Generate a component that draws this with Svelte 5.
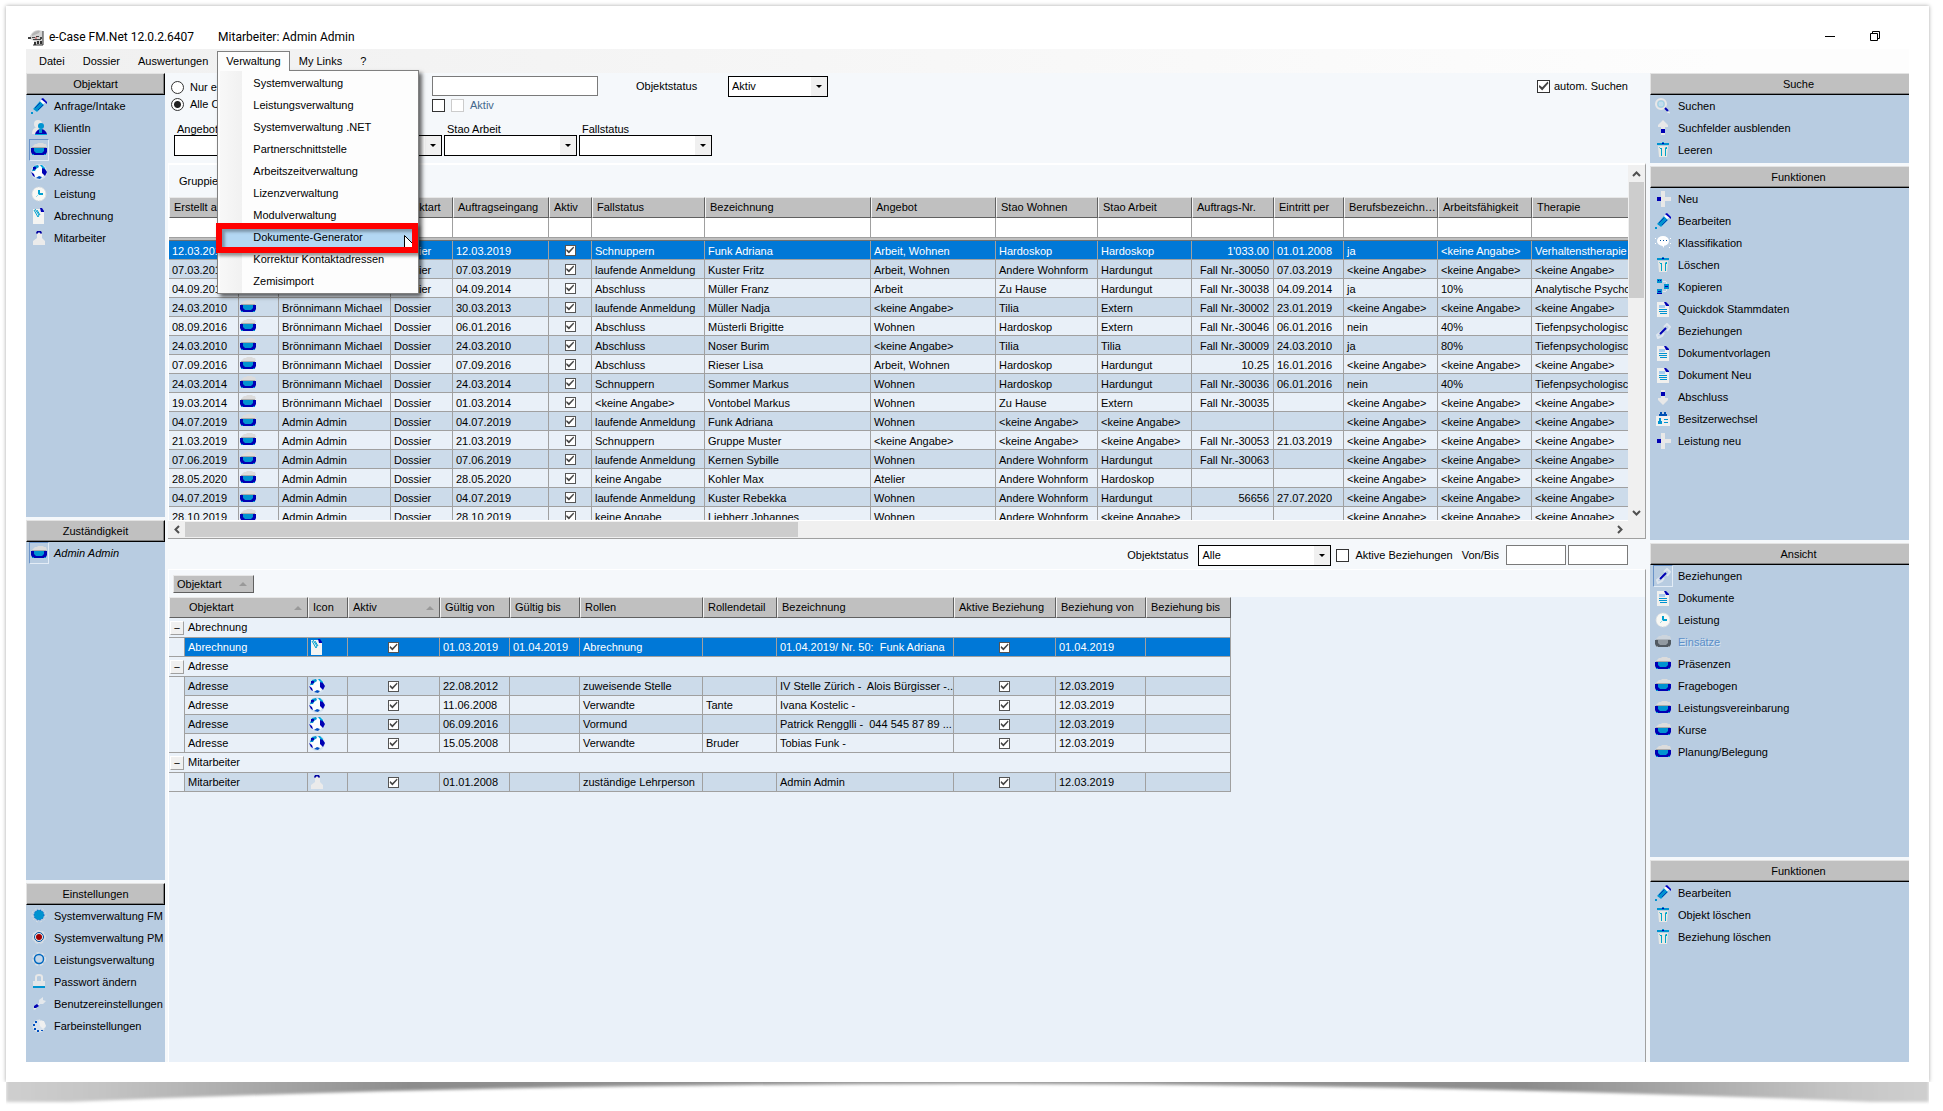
<script lang="ts">
    interface Column {
        label: string;
        width: number;
        type?: 'icon' | 'check' | 'number';
        sorted?: boolean;
    }

    interface Item {
        icon: string;
        label: string;
        active?: boolean;
        italic?: boolean;
        disabled?: boolean;
    }

    interface Panel {
        title: string;
        items: Item[];
    }

    const NONE = '<keine Angabe>';

    const menus = ['Datei', 'Dossier', 'Auswertungen', 'Verwaltung', 'My Links', '?'];
    const openMenu = 'Verwaltung';
    const menuItems = [
        'Systemverwaltung',
        'Leistungsverwaltung',
        'Systemverwaltung .NET',
        'Partnerschnittstelle',
        'Arbeitszeitverwaltung',
        'Lizenzverwaltung',
        'Modulverwaltung',
        'Dokumente-Generator',
        'Korrektur Kontaktadressen',
        'Zemisimport'
    ];
    const markedItem = 'Dokumente-Generator';

    const leftPanels: Panel[] = [
        {
            title: 'Objektart',
            items: [
                { icon: 'pen', label: 'Anfrage/Intake' },
                { icon: 'client', label: 'KlientIn' },
                { icon: 'folder', label: 'Dossier', active: true },
                { icon: 'globe', label: 'Adresse' },
                { icon: 'clock', label: 'Leistung' },
                { icon: 'bill', label: 'Abrechnung' },
                { icon: 'staff', label: 'Mitarbeiter' }
            ]
        },
        {
            title: 'Zuständigkeit',
            items: [{ icon: 'folder', label: 'Admin Admin', active: true, italic: true }]
        },
        {
            title: 'Einstellungen',
            items: [
                { icon: 'gearFull', label: 'Systemverwaltung FM' },
                { icon: 'gearRed', label: 'Systemverwaltung PM' },
                { icon: 'gear', label: 'Leistungsverwaltung' },
                { icon: 'lock', label: 'Passwort ändern' },
                { icon: 'wrench', label: 'Benutzereinstellungen' },
                { icon: 'palette', label: 'Farbeinstellungen' }
            ]
        }
    ];

    const rightPanels: Panel[] = [
        {
            title: 'Suche',
            items: [
                { icon: 'search', label: 'Suchen' },
                { icon: 'up', label: 'Suchfelder ausblenden' },
                { icon: 'trash', label: 'Leeren' }
            ]
        },
        {
            title: 'Funktionen',
            items: [
                { icon: 'plus', label: 'Neu' },
                { icon: 'pen', label: 'Bearbeiten' },
                { icon: 'bubble', label: 'Klassifikation' },
                { icon: 'trash', label: 'Löschen' },
                { icon: 'copy', label: 'Kopieren' },
                { icon: 'doc', label: 'Quickdok Stammdaten' },
                { icon: 'link', label: 'Beziehungen' },
                { icon: 'doc', label: 'Dokumentvorlagen' },
                { icon: 'doc', label: 'Dokument Neu' },
                { icon: 'down', label: 'Abschluss' },
                { icon: 'badge', label: 'Besitzerwechsel' },
                { icon: 'plus', label: 'Leistung neu' }
            ]
        },
        {
            title: 'Ansicht',
            items: [
                { icon: 'link', label: 'Beziehungen', active: true },
                { icon: 'doc', label: 'Dokumente' },
                { icon: 'clock', label: 'Leistung' },
                { icon: 'folder', label: 'Einsätze', disabled: true },
                { icon: 'folder', label: 'Präsenzen' },
                { icon: 'folder', label: 'Fragebogen' },
                { icon: 'folder', label: 'Leistungsvereinbarung' },
                { icon: 'folder', label: 'Kurse' },
                { icon: 'folder', label: 'Planung/Belegung' }
            ]
        },
        {
            title: 'Funktionen',
            items: [
                { icon: 'pen', label: 'Bearbeiten' },
                { icon: 'trash', label: 'Objekt löschen' },
                { icon: 'trash', label: 'Beziehung löschen' }
            ]
        }
    ];

    const filters = ['Angebot', 'Stao Wohnen', 'Stao Arbeit', 'Fallstatus'];

    const caseColumns: Column[] = [
        { label: 'Erstellt am', width: 70 },
        { label: 'Icon', width: 40, type: 'icon' },
        { label: 'Besitzer', width: 112 },
        { label: 'Objektart', width: 62 },
        { label: 'Auftragseingang', width: 96 },
        { label: 'Aktiv', width: 43, type: 'check' },
        { label: 'Fallstatus', width: 113 },
        { label: 'Bezeichnung', width: 166 },
        { label: 'Angebot', width: 125 },
        { label: 'Stao Wohnen', width: 102 },
        { label: 'Stao Arbeit', width: 94 },
        { label: 'Auftrags-Nr.', width: 82, type: 'number' },
        { label: 'Eintritt per', width: 70 },
        { label: 'Berufsbezeichnung', width: 94 },
        { label: 'Arbeitsfähigkeit', width: 94 },
        { label: 'Therapie', width: 180 }
    ];

    const BM = 'Brönnimann Michael';
    const AA = 'Admin Admin';

    // created, owner, received, state, name, offer, living, work, number, entry, job, ability, therapy
    const cases = [
        ['12.03.2019', BM, '12.03.2019', 'Schnuppern', 'Funk Adriana', 'Arbeit, Wohnen', 'Hardoskop', 'Hardoskop', "1'033.00", '01.01.2008', 'ja', NONE, 'Verhaltenstherapie'],
        ['07.03.2019', BM, '07.03.2019', 'laufende Anmeldung', 'Kuster Fritz', 'Arbeit, Wohnen', 'Andere Wohnform', 'Hardungut', 'Fall Nr.-30050', '07.03.2019', NONE, NONE, NONE],
        ['04.09.2014', BM, '04.09.2014', 'Abschluss', 'Müller Franz', 'Arbeit', 'Zu Hause', 'Hardungut', 'Fall Nr.-30038', '04.09.2014', 'ja', '10%', 'Analytische Psychotherapie'],
        ['24.03.2010', BM, '30.03.2013', 'laufende Anmeldung', 'Müller Nadja', NONE, 'Tilia', 'Extern', 'Fall Nr.-30002', '23.01.2019', NONE, NONE, NONE],
        ['08.09.2016', BM, '06.01.2016', 'Abschluss', 'Müsterli Brigitte', 'Wohnen', 'Hardoskop', 'Extern', 'Fall Nr.-30046', '06.01.2016', 'nein', '40%', 'Tiefenpsychologische Therapie'],
        ['24.03.2010', BM, '24.03.2010', 'Abschluss', 'Noser Burim', NONE, 'Tilia', 'Tilia', 'Fall Nr.-30009', '24.03.2010', 'ja', '80%', 'Tiefenpsychologische Therapie'],
        ['07.09.2016', BM, '07.09.2016', 'Abschluss', 'Rieser Lisa', 'Arbeit, Wohnen', 'Hardoskop', 'Hardungut', '10.25', '16.01.2016', NONE, NONE, NONE],
        ['24.03.2014', BM, '24.03.2014', 'Schnuppern', 'Sommer Markus', 'Wohnen', 'Hardoskop', 'Hardungut', 'Fall Nr.-30036', '06.01.2016', 'nein', '40%', 'Tiefenpsychologische Therapie'],
        ['19.03.2014', BM, '01.03.2014', NONE, 'Vontobel Markus', 'Wohnen', 'Zu Hause', 'Extern', 'Fall Nr.-30035', '', NONE, NONE, NONE],
        ['04.07.2019', AA, '04.07.2019', 'laufende Anmeldung', 'Funk Adriana', 'Wohnen', NONE, NONE, '', '', NONE, NONE, NONE],
        ['21.03.2019', AA, '21.03.2019', 'Schnuppern', 'Gruppe Muster', NONE, NONE, NONE, 'Fall Nr.-30053', '21.03.2019', NONE, NONE, NONE],
        ['07.06.2019', AA, '07.06.2019', 'laufende Anmeldung', 'Kernen Sybille', 'Wohnen', 'Andere Wohnform', 'Hardungut', 'Fall Nr.-30063', '', NONE, NONE, NONE],
        ['28.05.2020', AA, '28.05.2020', 'keine Angabe', 'Kohler Max', 'Atelier', 'Andere Wohnform', 'Hardoskop', '', '', NONE, NONE, NONE],
        ['04.07.2019', AA, '04.07.2019', 'laufende Anmeldung', 'Kuster Rebekka', 'Wohnen', 'Andere Wohnform', 'Hardungut', '56656', '27.07.2020', NONE, NONE, NONE],
        ['28.10.2019', AA, '28.10.2019', 'keine Angabe', 'Liebherr Johannes', 'Wohnen', 'Andere Wohnform', NONE, '', '', NONE, NONE, NONE]
    ];

    // every case row carries the same icon, type and tick
    const caseRows = cases.map(c => [c[0], 'folder', c[1], 'Dossier', c[2], 'x', ...c.slice(3)]);

    const relationColumns: Column[] = [
        { label: 'Objektart', width: 123, sorted: true },
        { label: 'Icon', width: 40, type: 'icon' },
        { label: 'Aktiv', width: 92, type: 'check', sorted: true },
        { label: 'Gültig von', width: 70 },
        { label: 'Gültig bis', width: 70 },
        { label: 'Rollen', width: 123 },
        { label: 'Rollendetail', width: 74 },
        { label: 'Bezeichnung', width: 177 },
        { label: 'Aktive Beziehung', width: 102, type: 'check' },
        { label: 'Beziehung von', width: 90 },
        { label: 'Beziehung bis', width: 85 }
    ];

    const relationGroups = [
        {
            name: 'Abrechnung',
            rows: [['Abrechnung', 'bill', 'x', '01.03.2019', '01.04.2019', 'Abrechnung', '', '01.04.2019/ Nr. 50:  Funk Adriana', 'x', '01.04.2019', '']]
        },
        {
            name: 'Adresse',
            rows: [
                ['Adresse', 'globe', 'x', '22.08.2012', '', 'zuweisende Stelle', '', 'IV Stelle Zürich -  Alois Bürgisser -...', 'x', '12.03.2019', ''],
                ['Adresse', 'globe', 'x', '11.06.2008', '', 'Verwandte', 'Tante', 'Ivana Kostelic -', 'x', '12.03.2019', ''],
                ['Adresse', 'globe', 'x', '06.09.2016', '', 'Vormund', '', 'Patrick Rengglli -  044 545 87 89 ...', 'x', '12.03.2019', ''],
                ['Adresse', 'globe', 'x', '15.05.2008', '', 'Verwandte', 'Bruder', 'Tobias Funk -', 'x', '12.03.2019', '']
            ]
        },
        {
            name: 'Mitarbeiter',
            rows: [['Mitarbeiter', 'staff', 'x', '01.01.2008', '', 'zuständige Lehrperson', '', 'Admin Admin', 'x', '12.03.2019', '']]
        }
    ];
</script>

{#snippet icon(name: string)}
    <svg class="icon" viewBox="0 0 16 16" aria-hidden="true">
        {#if name === 'pen'}
            <path d="M11 4 13 6 6 14 2 11 9 3z" fill="#e6e9ee" />
            <path d="M9 3 13 7 6 14 2 11z" fill="#0093d0" />
            <path d="M4 10 9 5M7 12 12 7" stroke="#0040b4" />
            <path d="M9 3 12 1 15 4 12 6z" fill="#fff" />
            <path d="M12 0 16 4V6L10 1z" fill="#0000c0" />
            <path d="M0 14h2v2h-2z" fill="#0093d0" />
        {:else if name === 'client'}
            <circle cx="7" cy="4" r="4" fill="#e8e8e8" />
            <path d="M1 14c0-5 3-7 6-7s5 3 5 7z" fill="#e8e8e8" />
            <circle cx="10" cy="6" r="3" fill="#0093d0" />
            <path d="M4 15c0-3 3-6 6-6s6 3 6 6z" fill="#0000b4" />
            <path d="M8 9h3v4h-3z" fill="#0093d0" />
            <path d="M4 14h12v1H4z" fill="#00a5dc" />
        {:else if name === 'folder'}
            <path d="M2 4 4 2H6l1-1h5l1 1h2l1 3H1z" fill="#dcdcdc" />
            <path d="M1 5h14v1H1z" fill="#aaa" />
            <path d="M0 6h16v4l-1 2H1l-1-2z" fill="#0000b4" />
            <path d="M3 6h10v3l-2 2H5L3 9z" fill="#0093d0" />
            <path d="M1 12h2v1H1zM13 12h2v1h-2z" fill="#0093d0" />
            <path d="M3 12h10v1H3z" fill="#0000b4" />
        {:else if name === 'globe'}
            <circle cx="8" cy="8" r="8" fill="#d5e3ef" />
            <circle cx="8" cy="8" r="6" fill="#fcfdfe" />
            <path d="M3 2 7 1 8 3 5 5 4 7H1z" fill="#0093d0" />
            <path d="M2 3h3v2L2 6z" fill="#0000b4" />
            <path d="M9 1h2l3 3v2l-2-1z" fill="#00a5dc" />
            <path d="M11 4l3 1 2 3-2 4-3-3z" fill="#0000b4" />
            <path d="M0 8l3 2 1 3-2-1z" fill="#0000b4" />
            <path d="M5 14l3-2 3 1-2 2z" fill="#0050c0" />
        {:else if name === 'clock'}
            <circle cx="8" cy="8" r="7" fill="#f8f8f4" stroke="#d8dce0" stroke-dasharray="2 1" />
            <path d="M8 4v4h4" fill="none" stroke="#00a0d0" stroke-width="2" />
            <path d="M8 8 5 11" stroke="#9adbe8" />
        {:else if name === 'bill'}
            <path d="M2 1h8l3 3v12H2z" fill="#f4f4f2" />
            <path d="M9 0h2l2 3v1h-3z" fill="#0000b4" />
            <path d="M3 2 7 9 8 7 4 1M6 2 9 7" fill="none" stroke="#00a0d0" />
        {:else if name === 'staff'}
            <path d="M6 3h5v5l3 3v4H2v-4l4-3z" fill="#ebebeb" />
            <path d="M5 3 6 1h4l1 2-1 1-2-2-2 2z" fill="#0000a0" />
        {:else if name === 'gearFull'}
            <circle cx="8" cy="7" r="7" fill="none" stroke="#d4dbe2" stroke-dasharray="2 2" />
            <circle cx="8" cy="7" r="5" fill="#0093d0" stroke="#0050c0" stroke-dasharray="1 2" />
        {:else if name === 'gearRed'}
            <circle cx="8" cy="7" r="6" fill="#e8e8e8" stroke="#d4dbe2" stroke-width="2" stroke-dasharray="3 2" />
            <circle cx="8" cy="7" r="4.500" fill="#e8e8e8" stroke="#0050a0" />
            <circle cx="8" cy="7" r="3" fill="#a00000" />
        {:else if name === 'gear'}
            <circle cx="8" cy="7" r="6" fill="none" stroke="#d8dfe6" stroke-width="2" stroke-dasharray="3 2" />
            <circle cx="8" cy="7" r="4.500" fill="#c4d6e8" stroke="#0068c0" stroke-width="1.500" />
        {:else if name === 'lock'}
            <path d="M5 7V3q0-2 3-2t3 2v4" fill="none" stroke="#e8e8e8" stroke-width="2" />
            <path d="M2 7h12v6H2z" fill="#e4e6e8" />
            <path d="M2 12h12v2H2z" fill="#0093d0" />
        {:else if name === 'wrench'}
            <path d="M2 13 8 7V4l4-3v3l3 1-3 3h-3l-5 6z" fill="#e4e8ec" />
            <path d="M3 10 6 8 8 10 5 12H3z" fill="#0000b4" />
        {:else if name === 'palette'}
            <circle cx="8" cy="8" r="6" fill="#d8e2ee" stroke="#e8ebee" stroke-dasharray="2 1" />
            <path d="M8 3h5l2 5-3 3-3-3z" fill="#f0f0f0" />
            <path d="M4 3h2v2H4zM2 6h2v2H2zM3 10h2v2H3zM6 12h2v2H6zM10 12h2v1h-2z" fill="#0050c0" />
        {:else if name === 'search'}
            <circle cx="6" cy="6" r="5" fill="none" stroke="#e8e8e8" stroke-width="2" />
            <circle cx="6" cy="6" r="3" fill="#c4dced" stroke="#9fd5e5" />
            <path d="M10 10 13 13" stroke="#0000b4" stroke-width="2" />
            <path d="M12 14 15 15" stroke="#eee" />
        {:else if name === 'up'}
            <path d="M8 0 13 5V7H10v8H6V7H3V5z" fill="#e8e8e8" />
            <path d="M6 9h4v4H6z" fill="#0000b4" />
        {:else if name === 'down'}
            <path d="M8 16 13 11V9H10V1H6V9H3v2z" fill="#e8e8e8" />
            <path d="M6 3h4v4H6z" fill="#0000b4" />
        {:else if name === 'trash'}
            <path d="M3 4h10l-1 11H4z" fill="#e8e8e4" />
            <path d="M2 1h5V0h2v1h5v2H2z" fill="#0093d0" />
            <path d="M7 1h2v1H7z" fill="#0000b4" />
            <path d="M4 5h1v2h1v7h1V6M11 5h1v2h-1v7h-1V6" fill="#00a5c8" />
        {:else if name === 'plus'}
            <path d="M6 0h4v6h6v4h-6v6H6v-6H2V6h4z" fill="#e8e8e8" />
            <path d="M2 6h4v4H2z" fill="#0000b4" />
        {:else if name === 'bubble'}
            <ellipse cx="8" cy="6" rx="6" ry="5" fill="#fff" />
            <path d="M6 9 9 13V9z" fill="#fff" />
            <path d="M5 5h1v1H5zM8 5h1v1H8zM11 5h1v1h-1z" fill="#0050a0" />
            <path d="M0 3h1v1H0zM15 3h1v1h-1zM0 8h1v1H0zM15 8h1v1h-1zM14 12h1v1h-1z" fill="#fff" />
        {:else if name === 'copy'}
            <path d="M2 0h5v4H2zM2 10h5v5H2zM9 5h5v5H9z" fill="#0093d0" />
            <path d="M3 1h1v1H3zM5 1h1v1H5zM3 12h3v1H3zM10 7h3v1h-3zM2 14h5v1H2z" fill="#0000b4" />
            <path d="M8 2h3v1H8zM11 3h1v2h-1zM8 12h3v1H8zM11 10h1v2h-1z" fill="#e0e6ec" />
        {:else if name === 'doc'}
            <path d="M2 1h8l4 4v11H2z" fill="#f0f0ee" />
            <path d="M4 4h6v3H4z" fill="#a8cbee" />
            <path d="M9 1h2l3 3v1h-3z" fill="#0000b4" />
            <path d="M4 8h8v1H4zM4 10h8v1H4zM5 12h7v1H5z" fill="#0093d0" />
        {:else if name === 'link'}
            <path d="M9 4 12 1 15 4 12 8M7 8 2 12l1 3 4-2 2-3" fill="none" stroke="#dde5ee" stroke-width="2" />
            <path d="M5 11 11 5" stroke="#0000b4" stroke-width="2" />
        {:else if name === 'badge'}
            <path d="M1 5h14v10H1z" fill="#f0f0f0" />
            <path d="M5 1h2v3H5zM9 1h2v3H9zM4 3h8v2H4z" fill="#0050b4" />
            <path d="M4 7h2v3h1v3H3v-3h1zM9 8h4v1H9zM9 11h4v1H9z" fill="#0093d0" />
        {/if}
    </svg>
{/snippet}

{#snippet sidePanel(panel: Panel)}
    <section class="panel">
        <h2>{panel.title}</h2>
        <ul>
            {#each panel.items as item}
                <li>
                    <button class="item" class:active={item.active} class:italic={item.italic} disabled={item.disabled}>
                        <span class="slot">{@render icon(item.icon)}</span>{item.label}
                    </button>
                </li>
            {/each}
        </ul>
    </section>
{/snippet}

{#snippet cell(column: Column, value: string)}
    {#if column.type === 'icon'}
        <td class="icon-cell">{@render icon(value)}</td>
    {:else if column.type === 'check'}
        <td class="check-cell"><input type="checkbox" checked aria-label={column.label} /></td>
    {:else}
        <td class:number={column.type === 'number'}>{value}</td>
    {/if}
{/snippet}

<div class="page">
    <div class="sheet">
        <header class="titlebar">
            <svg class="logo" viewBox="0 0 16 16" aria-hidden="true">
                <path d="M2 6q3-6 8-6l5 1v14H6V11L2 9z" fill="#d4d4d4" />
                <path d="M4 4q4-4 8-3l-1 2-7 3z" fill="#b4b4b4" />
                <path d="M0 7h3v2H0zM4 7h3v1H4zM8 6h3v1H8zM12 7h2v2h-2zM5 9h8v1H5z" fill="#444" />
                <path d="M7 7h2v2H7z" fill="#c88" />
                <path d="M6 12h2v3H6zM9 11h2v3H9zM12 11h2v3h-2z" fill="#333" />
                <path d="M15 1v14H5" fill="none" stroke="#333" />
            </svg>
            <span class="app-name">e-Case FM.Net 12.0.2.6407</span>
            <span>Mitarbeiter: Admin Admin</span>
            <div class="window-buttons">
                <button aria-label="Minimieren">
                    <svg viewBox="0 0 10 10"><path d="M0 5.500h10" stroke="#000" /></svg>
                </button>
                <button aria-label="Wiederherstellen">
                    <svg viewBox="0 0 10 10"><path d="M.5 2.500h7v7h-7zM2.500 2.500v-2h7v7h-2" fill="none" stroke="#000" /></svg>
                </button>
            </div>
        </header>

        <nav class="menubar">
            {#each menus as menu}
                <div class="menu" class:open={menu === openMenu}>
                    <button>{menu}</button>
                    {#if menu === openMenu}
                        <ul class="dropdown">
                            {#each menuItems as item}
                                <li class:marked={item === markedItem}>
                                    <button>{item}</button>
                                    {#if item === markedItem}
                                        <svg class="pointer" viewBox="0 0 8 12" aria-hidden="true">
                                            <path d="M.5 12V.5L8 8v4z" fill="#fff" />
                                            <path d="M.5 12V.5L8 8" fill="none" stroke="#000" />
                                        </svg>
                                    {/if}
                                </li>
                            {/each}
                        </ul>
                    {/if}
                </div>
            {/each}
        </nav>

        <div class="body">
            <aside class="left">
                {#each leftPanels as panel}
                    {@render sidePanel(panel)}
                {/each}
            </aside>

            <main>
                <div class="upper">
                    <form class="filter">
                        <div class="search-line">
                            <div class="radios">
                                <label><input type="radio" name="scope" /> Nur eigene</label>
                                <label><input type="radio" name="scope" checked /> Alle Objekte</label>
                            </div>
                            <div class="query">
                                <input type="text" aria-label="Suchtext" />
                                <div class="query-checks">
                                    <input type="checkbox" aria-label="Filter" />
                                    <label><input type="checkbox" disabled /> Aktiv</label>
                                </div>
                            </div>
                            <label class="state" for="state">Objektstatus</label>
                            <span class="combo short">
                                <select id="state"><option>Aktiv</option></select>
                            </span>
                            <label class="auto"><input type="checkbox" checked /> autom. Suchen</label>
                        </div>
                        <div class="combos">
                            {#each filters as filter}
                                <label>
                                    {filter}
                                    <span class="combo"><select><option></option></select></span>
                                </label>
                            {/each}
                        </div>
                    </form>

                    <div class="pane">
                        <div class="viewport">
                            <div class="group-bar">Gruppierung</div>
                            <table>
                                <colgroup>
                                    {#each caseColumns as column}
                                        <col style="width: {column.width}px" />
                                    {/each}
                                </colgroup>
                                <thead>
                                    <tr>
                                        {#each caseColumns as column}
                                            <th>{column.label}</th>
                                        {/each}
                                    </tr>
                                    <tr class="filter-row">
                                        {#each caseColumns as _}
                                            <td></td>
                                        {/each}
                                    </tr>
                                    <tr class="splitter"><td colspan={caseColumns.length}></td></tr>
                                </thead>
                                <tbody>
                                    {#each caseRows as row, i}
                                        <tr class:odd={i % 2 === 1} class:selected={i === 0}>
                                            {#each caseColumns as column, c}
                                                {@render cell(column, row[c])}
                                            {/each}
                                        </tr>
                                    {/each}
                                </tbody>
                            </table>
                        </div>
                        <div class="vscroll">
                            <button aria-label="Nach oben"><svg viewBox="0 0 9 6"><path d="M1 5l3.500-3.500L8 5" /></svg></button>
                            <div class="track"><div class="thumb"></div></div>
                            <button aria-label="Nach unten"><svg viewBox="0 0 9 6"><path d="M1 1l3.500 3.500L8 1" /></svg></button>
                        </div>
                        <div class="hscroll">
                            <button aria-label="Nach links"><svg viewBox="0 0 6 9"><path d="M5 1L1.500 4.500 5 8" /></svg></button>
                            <div class="track"><div class="thumb"></div></div>
                            <button aria-label="Nach rechts"><svg viewBox="0 0 6 9"><path d="M1 1l3.500 3.500L1 8" /></svg></button>
                        </div>
                    </div>
                </div>

                <div class="lower">
                    <form class="relation-filter">
                        <label for="relation-state">Objektstatus</label>
                        <span class="combo">
                            <select id="relation-state"><option>Alle</option></select>
                        </span>
                        <label class="active-only"><input type="checkbox" /> Aktive Beziehungen</label>
                        <label class="range" for="from">Von/Bis</label>
                        <input type="text" id="from" />
                        <input type="text" aria-label="Bis" />
                    </form>

                    <div class="relations">
                        <div class="group-bar">
                            <button class="group-tag">Objektart <span class="sort"></span></button>
                        </div>
                        <table>
                            <colgroup>
                                <col class="gutter-col" />
                                {#each relationColumns as column}
                                    <col style="width: {column.width}px" />
                                {/each}
                            </colgroup>
                            <thead>
                                <tr>
                                    {#each relationColumns as column, i}
                                        <th colspan={i === 0 ? 2 : 1} class:indented={i === 0}>
                                            {column.label}
                                            {#if column.sorted}<span class="sort"></span>{/if}
                                        </th>
                                    {/each}
                                </tr>
                            </thead>
                            {#each relationGroups as group, g}
                                <tbody>
                                    <tr class="group">
                                        <td colspan={relationColumns.length + 1}>
                                            <div><button aria-label="{group.name} zuklappen">−</button>{group.name}</div>
                                        </td>
                                    </tr>
                                    {#each group.rows as row, i}
                                        <tr class:odd={i % 2 === 0} class:selected={g === 0}>
                                            <td class="gutter" class:last={i === group.rows.length - 1}></td>
                                            {#each relationColumns as column, c}
                                                {@render cell(column, row[c])}
                                            {/each}
                                        </tr>
                                    {/each}
                                </tbody>
                            {/each}
                        </table>
                    </div>
                </div>
            </main>

            <aside class="right">
                {#each rightPanels as panel}
                    {@render sidePanel(panel)}
                {/each}
            </aside>
        </div>
    </div>

    <svg class="curl" viewBox="0 0 1923 29" preserveAspectRatio="none" aria-hidden="true">
        <defs>
            <linearGradient id="curl-fill">
                <stop offset="0" stop-color="#cfcfcf" />
                <stop offset="0.05" stop-color="#c4c4c4" />
                <stop offset="0.21" stop-color="#8c8c8c" />
                <stop offset="0.5" stop-color="#969696" />
                <stop offset="0.79" stop-color="#8c8c8c" />
                <stop offset="0.95" stop-color="#c4c4c4" />
                <stop offset="1" stop-color="#cfcfcf" />
            </linearGradient>
            <filter id="curl-soft" x="-1%" y="-40%" width="102%" height="180%">
                <feGaussianBlur stdDeviation="1.500" />
            </filter>
        </defs>
        <path d="M0-6H1923V20H1865Q1440 2 962 2T62 20H0z" fill="url(#curl-fill)" filter="url(#curl-soft)" />
    </svg>
</div>

<style>
    :global(body) {
        margin: 0;
        background: #fff;
    }

    .page {
        box-sizing: border-box;
        height: 100vh;
        min-height: 800px;
        padding: 6px 14px 0 6px;
        display: flex;
        flex-direction: column;
        background: #fff;
        color: #000;
        font: 11px/13px "Liberation Sans", Arial, sans-serif;
    }

    button,
    input,
    select {
        font: inherit;
        color: inherit;
    }

    button {
        border: 0;
        padding: 0;
        background: none;
        white-space: nowrap;
    }

    ul {
        list-style: none;
        margin: 0;
        padding: 0;
    }

    .sheet {
        position: relative;
        z-index: 1;
        flex: 1;
        min-height: 0;
        box-sizing: border-box;
        padding: 20px;
        display: flex;
        flex-direction: column;
        background: #fff;
        box-shadow: 0 0 4px rgba(0, 0, 0, 0.35);
        clip-path: inset(-6px -6px 0 -6px);
    }

    .curl {
        display: block;
        flex: none;
        width: 100%;
        height: 29px;
    }

    .icon {
        display: block;
        width: 16px;
        height: 16px;
    }

    /* title bar and menus */

    .titlebar {
        display: flex;
        align-items: center;
        height: 23px;
        padding: 0 29px 0 2px;
        font-family: Roboto, sans-serif;
        font-size: 12px;
    }

    .logo {
        width: 16px;
        height: 16px;
        margin-right: 5px;
    }

    .app-name {
        margin-right: 24px;
    }

    .window-buttons {
        display: flex;
        gap: 35px;
        margin-left: auto;
        margin-bottom: 4px;
    }

    .window-buttons svg {
        display: block;
        width: 10px;
        height: 10px;
    }

    .menubar {
        display: flex;
        height: 24px;
        padding-left: 4px;
        background: linear-gradient(90deg, #f0f0f0, #fdfdfd 90%);
    }

    .menu {
        position: relative;
        height: 19px;
        margin-top: 2px;
        border: 1px solid transparent;
        border-bottom: 0;
    }

    .menu > button {
        position: relative;
        height: 19px;
        padding: 0 8px;
    }

    .menu.open {
        border-color: #808080;
    }

    .menu.open > button {
        z-index: 3;
        background: #fdfdfd;
    }

    .dropdown {
        position: absolute;
        z-index: 2;
        top: 18px;
        left: -1px;
        width: 200px;
        padding: 1px 0;
        border: 1px solid #808080;
        background: linear-gradient(90deg, #fdfdfd 2px, #f8f8f8 2px, #f1f1f1 24px, #fdfdfd 24px);
        box-shadow: 3px 3px 4px rgba(0, 0, 0, 0.6);
    }

    .dropdown li {
        position: relative;
        height: 22px;
    }

    .dropdown li > button {
        width: 100%;
        height: 22px;
        padding-left: 35px;
        text-align: left;
    }

    .dropdown .marked > button {
        background: #b3d7f3;
    }

    .marked::after {
        content: "";
        position: absolute;
        inset: -3px 0 -5px -2px;
        border: 6px solid #f00;
        box-shadow: 2px 3px 3px rgba(0, 0, 0, 0.4), inset 3px 3px 3px rgba(0, 0, 0, 0.3);
    }

    .pointer {
        position: absolute;
        right: 6px;
        bottom: 1px;
        width: 8px;
        height: 12px;
    }

    /* side panels */

    .body {
        flex: 1;
        min-height: 0;
        display: grid;
        grid-template-columns: 139px minmax(0, 1fr) 259px;
        column-gap: 3px;
        background: #f5f8fb;
    }

    aside {
        display: grid;
        row-gap: 3px;
        min-height: 0;
    }

    .left {
        grid-template-rows: 444fr 360fr 179fr;
    }

    .right {
        grid-template-rows: 90px 374fr 314fr 202fr;
    }

    .panel {
        min-height: 0;
        background: #b8cce1;
    }

    h2 {
        box-sizing: border-box;
        height: 22px;
        margin: 0;
        border: 1px solid;
        border-color: #e3e3e3 #000 #000 #e3e3e3;
        box-shadow: inset -1px -1px #808080;
        background: #c0c0c0;
        font-size: 11px;
        font-weight: 400;
        line-height: 20px;
        text-align: center;
    }

    .right h2 {
        padding-left: 37px;
        border-right: 0;
        box-shadow: inset 0 -1px #808080;
    }

    .item {
        display: flex;
        align-items: center;
        width: 100%;
        height: 22px;
        padding-left: 3px;
        text-align: left;
    }

    .slot {
        box-sizing: border-box;
        width: 20px;
        height: 22px;
        margin-right: 5px;
        padding: 2px 1px;
        border: 1px solid transparent;
    }

    .active .slot {
        border-color: #6a93c8 #e3ecf6 #e3ecf6 #6a93c8;
    }

    .italic {
        font-style: italic;
    }

    .item:disabled {
        color: #5b8fc9;
        text-shadow: 1px 1px #d6e3f1;
    }

    .item:disabled .icon {
        filter: grayscale(1);
        opacity: 0.6;
    }

    /* controls */

    input[type="text"] {
        box-sizing: border-box;
        height: 20px;
        border: 1px solid #7a7a7a;
        padding: 0 3px;
        background: #fff;
    }

    input[type="checkbox"],
    input[type="radio"] {
        appearance: none;
        box-sizing: border-box;
        flex: none;
        width: 13px;
        height: 13px;
        margin: 0;
        border: 1px solid #333;
        background: #fff;
    }

    input[type="radio"] {
        border-radius: 50%;
    }

    input[type="radio"]:checked {
        background: radial-gradient(circle, #222 3px, #fff 4px);
    }

    input[type="checkbox"]:disabled {
        border-color: #ccc;
    }

    input[type="checkbox"]:checked::after {
        content: "";
        display: block;
        width: 100%;
        height: 100%;
        background: #444;
        clip-path: polygon(12% 40%, 38% 62%, 88% 10%, 95% 26%, 38% 90%, 8% 58%);
    }

    label {
        display: flex;
        align-items: center;
        white-space: nowrap;
    }

    .combo {
        position: relative;
        display: block;
        height: 21px;
    }

    .combo::after {
        content: "";
        position: absolute;
        right: 6px;
        top: 9px;
        border: solid transparent;
        border-width: 3px 3px 0;
        border-top-color: #000;
    }

    select {
        display: block;
        appearance: none;
        box-sizing: border-box;
        width: 100%;
        height: 21px;
        border: 1px solid #000;
        border-radius: 0;
        padding: 0 18px 0 3px;
        background: linear-gradient(270deg, #f0f0f0 16px, #fff 16px);
    }

    /* search area */

    main {
        display: grid;
        grid-template-rows: minmax(0, 466fr) minmax(0, 523fr);
        min-height: 0;
    }

    .upper,
    .lower {
        display: flex;
        flex-direction: column;
        min-height: 0;
    }

    .filter {
        height: 90px;
        flex: none;
    }

    .search-line {
        display: flex;
        height: 47px;
        padding: 3px 19px 0 3px;
    }

    .radios {
        width: 261px;
        padding-top: 3px;
    }

    .radios label {
        height: 17px;
        gap: 6px;
    }

    .query input[type="text"] {
        display: block;
        width: 166px;
    }

    .query-checks {
        display: flex;
        gap: 6px;
        margin-top: 3px;
        color: #44688c;
    }

    .query-checks label {
        gap: 6px;
    }

    .state {
        width: 92px;
        height: 20px;
        margin-left: 38px;
    }

    .short {
        width: 100px;
    }

    .auto {
        gap: 4px;
        height: 20px;
        margin-left: auto;
    }

    .combos {
        display: flex;
        gap: 2px;
        padding-left: 6px;
    }

    .combos label {
        display: block;
        width: 133px;
        line-height: 12px;
        text-indent: 3px;
    }

    /* grids */

    .pane {
        flex: 1;
        min-height: 0;
        display: grid;
        grid-template: minmax(0, 1fr) 17px / minmax(0, 1fr) 17px;
        margin-right: 1px;
        border: solid;
        border-width: 2px 1px 1px 0;
        border-color: #fff #a0a0a0 #a0a0a0;
    }

    .viewport {
        overflow: hidden;
        border-left: 1px solid #fff;
        border-bottom: 1px solid #fff;
    }

    .group-bar {
        height: 32px;
        padding-left: 10px;
        line-height: 32px;
    }

    table {
        table-layout: fixed;
        width: 0;
        border-collapse: separate;
        border-spacing: 0;
    }

    th,
    td {
        box-sizing: border-box;
        padding: 0 0 0 3px;
        overflow: hidden;
        white-space: pre;
        text-align: left;
    }

    th {
        position: relative;
        height: 21px;
        padding-left: 4px;
        border: solid;
        border-width: 1px;
        border-color: #e8e8e8 #606060 #606060 #f4f4f4;
        background: #c0c0c0;
        font-weight: 400;
        text-overflow: ellipsis;
    }

    td {
        height: 19px;
        border: solid #a0a0a0;
        border-width: 0 1px 1px 0;
        background: #e9f0f8;
    }

    .upper tbody td {
        padding-top: 2px;
    }

    .odd td {
        background: #ccdbea;
    }

    .selected td {
        background: #0078d7;
        color: #fff;
    }

    .filter-row td {
        height: 20px;
        background: #fff;
    }

    .splitter td {
        height: 3px;
        padding: 0;
        border-width: 0 0 1px;
        border-color: #707070;
        background: #c0c0c0;
    }

    .number {
        text-align: right;
        padding-right: 4px;
    }

    .icon-cell,
    .upper tbody .icon-cell {
        padding: 0 1px;
    }

    .check-cell,
    .upper tbody .check-cell {
        padding: 0;
        text-align: center;
    }

    td input[type="checkbox"] {
        display: block;
        width: 11px;
        height: 11px;
        margin: 0 auto;
        border-color: #555;
    }

    .vscroll,
    .hscroll {
        display: flex;
        background: #f0f0f0;
    }

    .vscroll {
        flex-direction: column;
    }

    .hscroll {
        grid-column: 1 / 3;
        padding-right: 17px;
    }

    .vscroll button,
    .hscroll button {
        display: grid;
        place-items: center;
        width: 17px;
        height: 17px;
    }

    .vscroll svg {
        width: 9px;
        height: 6px;
    }

    .hscroll svg {
        width: 6px;
        height: 9px;
    }

    .vscroll path,
    .hscroll path {
        fill: none;
        stroke: #505050;
        stroke-width: 2;
    }

    .track {
        flex: 1;
    }

    .thumb {
        background: #cdcdcd;
    }

    .vscroll .thumb {
        height: 36%;
        margin: 0 1px;
    }

    .hscroll .thumb {
        width: 43%;
        height: 15px;
        margin: 1px 0;
    }

    /* relations */

    .relation-filter {
        display: flex;
        justify-content: flex-end;
        flex: none;
        height: 24px;
        padding: 6px 19px 0 0;
    }

    .relation-filter label {
        height: 20px;
    }

    .relation-filter .combo {
        width: 133px;
        margin: 0 5px 0 10px;
    }

    .relation-filter .active-only {
        gap: 6px;
        margin-right: 9px;
    }

    .relation-filter .range {
        margin-right: 5px;
    }

    .relation-filter input[type="text"] {
        width: 60px;
        margin-left: 2px;
    }

    .relations {
        flex: 1;
        min-height: 0;
        margin-right: 1px;
        overflow: hidden;
        border: solid;
        border-width: 1px 1px 0;
        border-color: #fff #a0a0a0 #fff #fff;
        background: #eaf1f9;
    }

    .relations .group-bar {
        display: flex;
        align-items: center;
        height: 27px;
        padding-left: 4px;
        background: #f5f8fb;
    }

    .group-tag {
        display: flex;
        align-items: center;
        justify-content: space-between;
        width: 81px;
        height: 18px;
        padding: 0 6px 0 3px;
        border: 1px solid;
        border-color: #e8e8e8 #606060 #606060 #e8e8e8;
        background: #c0c0c0;
    }

    .sort {
        border: solid transparent;
        border-width: 0 4px 4px;
        border-bottom-color: #999;
    }

    th .sort {
        position: absolute;
        right: 5px;
        top: 8px;
    }

    .gutter-col {
        width: 16px;
    }

    th.indented {
        padding-left: 19px;
    }

    .group td {
        height: 20px;
        padding: 0 1px;
        background: #eaf1f9;
    }

    .group div {
        display: flex;
        align-items: center;
        gap: 4px;
    }

    .group button {
        width: 14px;
        height: 14px;
        border: 1px solid;
        border-color: #fff #a0a0a0 #a0a0a0 #fff;
        background: #f0f0f0;
        line-height: 12px;
    }

    tr td.gutter {
        border-bottom: 0;
        background: #eaf1f9;
    }

    tr td.last {
        border-bottom: 1px solid #a0a0a0;
    }
</style>
